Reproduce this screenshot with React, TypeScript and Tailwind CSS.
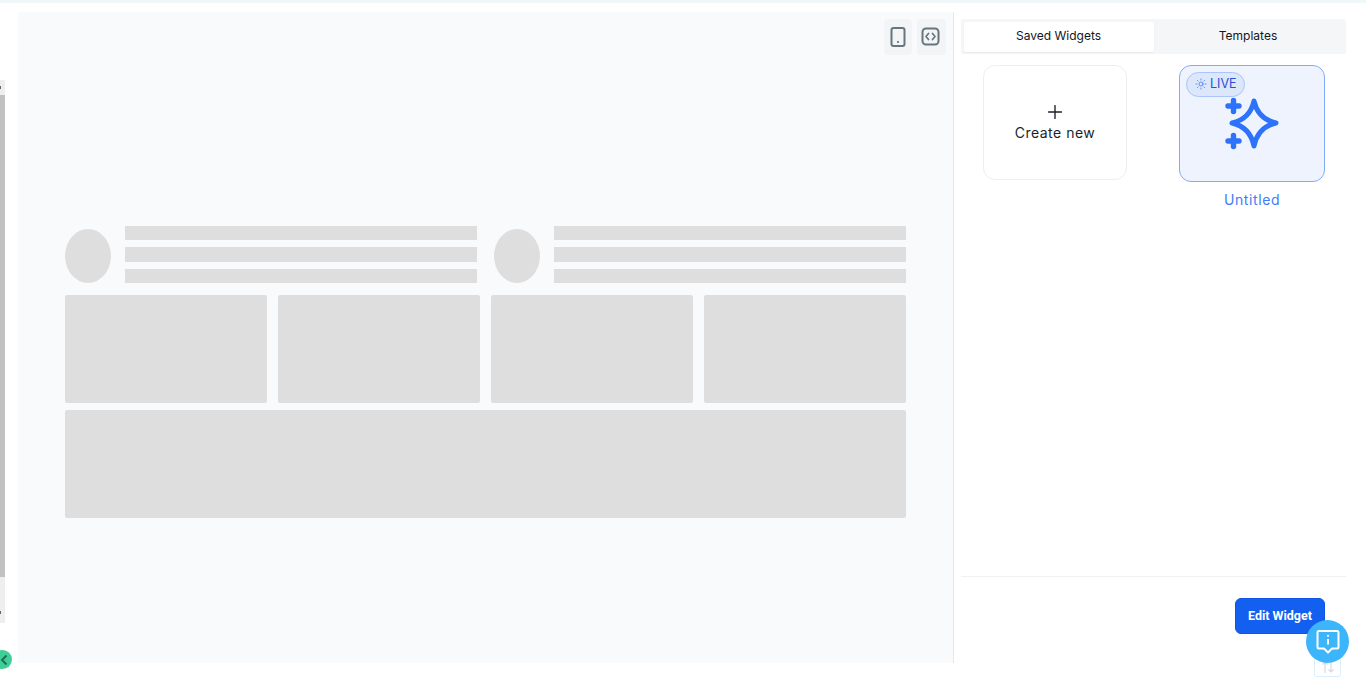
import { Plus, Sun } from 'lucide-react';

function SkeletonHead() {
  return (
    <div className="flex flex-1 items-end gap-[14px]">
      <div className="h-[54px] w-[46px] shrink-0 rounded-[50%] bg-[#dedede]" />
      <div className="flex flex-1 flex-col">
        <div className="h-[14px] bg-[#dedede]" />
        <div className="mt-[7px] h-[15px] bg-[#dedede]" />
        <div className="mt-[7px] h-[14px] bg-[#dedede]" />
      </div>
    </div>
  );
}

function Canvas() {
  return (
    <div className="flex h-[651px] w-[935px] flex-col bg-[#f9fafc]">
      <div className="flex justify-end gap-[5px] pr-[7px] pt-[7px]">
        <button className="flex h-[36px] w-[28px] items-center justify-center rounded-[4px] bg-[#f3f4f6] pb-[1px]">
          <svg width="16" height="22" viewBox="0 0 16 22" fill="none" stroke="#66767f" strokeWidth="2">
            <rect x="1.500" y="2" width="13" height="18" rx="2" />
            <circle cx="8" cy="16" r="0.7" fill="#66767f" strokeWidth="1" />
          </svg>
        </button>
        <button className="flex h-[36px] w-[29px] items-center justify-center rounded-[4px] bg-[#f3f4f6] pb-[1px] pr-[2px]">
          <svg width="19" height="19" viewBox="0 0 19 19" fill="none" stroke="#66767f" strokeWidth="2" strokeLinecap="round" strokeLinejoin="round">
            <rect x="1.500" y="1.500" width="16" height="16" rx="3.500" />
            <path d="M7.500 6.500 5 9.500 7.500 12.500M11.500 6.500 14 9.500 11.500 12.500" strokeWidth="1.700" />
          </svg>
        </button>
      </div>
      <div className="ml-[47px] mt-[171px] flex w-[841px] flex-col">
        <div className="flex gap-[17px]">
          <SkeletonHead />
          <SkeletonHead />
        </div>
        <div className="mt-[12px] grid grid-cols-4 gap-[11px]">
          <div className="h-[108px] rounded-[2px] bg-[#dedede]" />
          <div className="h-[108px] rounded-[2px] bg-[#dedede]" />
          <div className="h-[108px] rounded-[2px] bg-[#dedede]" />
          <div className="h-[108px] rounded-[2px] bg-[#dedede]" />
        </div>
        <div className="mt-[7px] h-[108px] rounded-[2px] bg-[#dedede]" />
      </div>
    </div>
  );
}

function SidePanel() {
  return (
    <div className="flex h-[651px] w-[413px] flex-col border-l border-[#e5e9ef] pl-[7px]">
      <div className="mt-[7px] flex h-[35px] w-[385px] items-center rounded-[2px] bg-[#f5f6f8] px-[3px] pb-[2px] text-[12px] font-normal text-[#14151d]">
        <div className="mt-[2px] flex h-[30px] w-[190px] items-center justify-center rounded-[2px] bg-white pb-[2px] pr-[1px] shadow-[0_1px_2px_rgba(0,0,0,0.06)]">Saved Widgets</div>
        <div className="flex flex-1 items-center justify-center pr-[1px]">Templates</div>
      </div>

      <div className="mt-[11px] flex items-start">
        <div className="ml-[22px] flex h-[115px] w-[144px] flex-col items-center rounded-[12px] border border-[#eceef1] bg-white pt-[35px] text-[14px] tracking-[0.5px] text-[#1a1f2b]">
          <Plus size={22} strokeWidth={1.5} color="#1a1f2b" />
          <span className="leading-[20px]">Create new</span>
        </div>
        <div className="ml-[52px] flex w-[146px] flex-col items-center">
          <div className="relative flex h-[117px] w-[146px] justify-center rounded-[12px] border border-[#84abfb] bg-[#eef3fe] pt-[31px]">
            <div className="absolute left-[6px] top-[6px] flex h-[25px] w-[59px] items-center gap-[3px] rounded-full border border-[#a9c5fa] bg-[#dce7fc] pb-[1px] pl-[8px] text-[12.500px] font-normal text-[#2a4fd6]">
              <Sun size={12} color="#3f78f4" strokeWidth={1.6} />
              <span>LIVE</span>
            </div>
            <svg width="54" height="54" viewBox="0 0 54 54" fill="none" stroke="#2c72fb" strokeLinecap="round" strokeLinejoin="round">
              <path d="M29 4Q33 22 51 26Q33 30 29 49Q25 30 7 26Q25 22 29 4Z" strokeWidth="5" />
              <path d="M8.500 3.500V14.500M3 9H14M8.500 38.500V49.500M3 44H14" strokeWidth="5.400" />
            </svg>
          </div>
          <span className="mt-[8px] text-[14px] leading-[20px] tracking-[0.6px] text-[#3f7cfb]">Untitled</span>
        </div>
      </div>

      <div className="mt-auto w-[385px] border-t border-[#f0f1f3] pb-[29px] pt-[21px]">
        <div className="flex justify-end pr-[21px]">
          <button className="h-[36px] w-[90px] rounded-[6px] border border-[#0d55e4] bg-[#135ff0] font-['Roboto',sans-serif] text-[12.500px] font-bold text-white">Edit Widget</button>
        </div>
      </div>
    </div>
  );
}

export default function App() {
  return (
    <div className="relative h-[685px] w-[1366px] overflow-hidden bg-white font-['Inter',sans-serif]">
      <div className="h-[3px] bg-[#f0f7f9]" />
      <div className="flex pt-[9px]">
        <div className="w-[18px] shrink-0 pt-[68px]">
          <div className="flex h-[15px] w-[5px] items-center bg-[#eeeeee]">
            <div className="h-[3px] w-[1px] bg-[#666666]" />
          </div>
          <div className="h-[482px] w-[5px] bg-[#c1c1c1]" />
          <div className="flex h-[46px] w-[5px] items-end bg-[#eeeeee] pb-[9px]">
            <div className="h-[3px] w-[1px] bg-[#666666]" />
          </div>
        </div>
        <Canvas />
        <SidePanel />
      </div>

      <div className="absolute left-[-7px] top-[650px] flex h-[19px] w-[19px] items-center justify-center rounded-full bg-[#41cd96] pl-[2px]">
        <svg width="8" height="12" viewBox="0 0 8 12" fill="none" stroke="#1c6b5c" strokeWidth="1.800">
          <path d="M6.500 1.500 2 6l4.500 4.500" />
        </svg>
      </div>

      <div className="absolute left-[1314px] top-[650px] flex h-[27px] w-[27px] items-end justify-center rounded-[3px] border border-[#dcedfb] pb-[2px]">
        <svg width="14" height="14" viewBox="0 0 14 14" fill="none" stroke="#d5dadf" strokeWidth="1.200">
          <path d="M4 13V2M1.500 4.500 4 2l2.500 2.500M10 1v11M7.500 9.500 10 12l2.500-2.500" />
        </svg>
      </div>
      <div className="absolute left-[1306px] top-[620px] flex h-[43px] w-[43px] items-center justify-center rounded-full bg-[#3db5fb]">
        <svg width="24" height="26" viewBox="0 0 24 26" fill="none" stroke="white" strokeWidth="2" strokeLinejoin="round">
          <path d="M3 2H21A1.500 1.500 0 0 1 22.500 3.500V18A1.500 1.500 0 0 1 21 19.500H16L12 23.500L8 19.500H3A1.500 1.500 0 0 1 1.500 18V3.500A1.500 1.500 0 0 1 3 2Z" />
          <path d="M12 10V15.500" strokeWidth="2" />
          <circle cx="12" cy="6.800" r="1.100" fill="white" stroke="none" />
        </svg>
      </div>
    </div>
  );
}
